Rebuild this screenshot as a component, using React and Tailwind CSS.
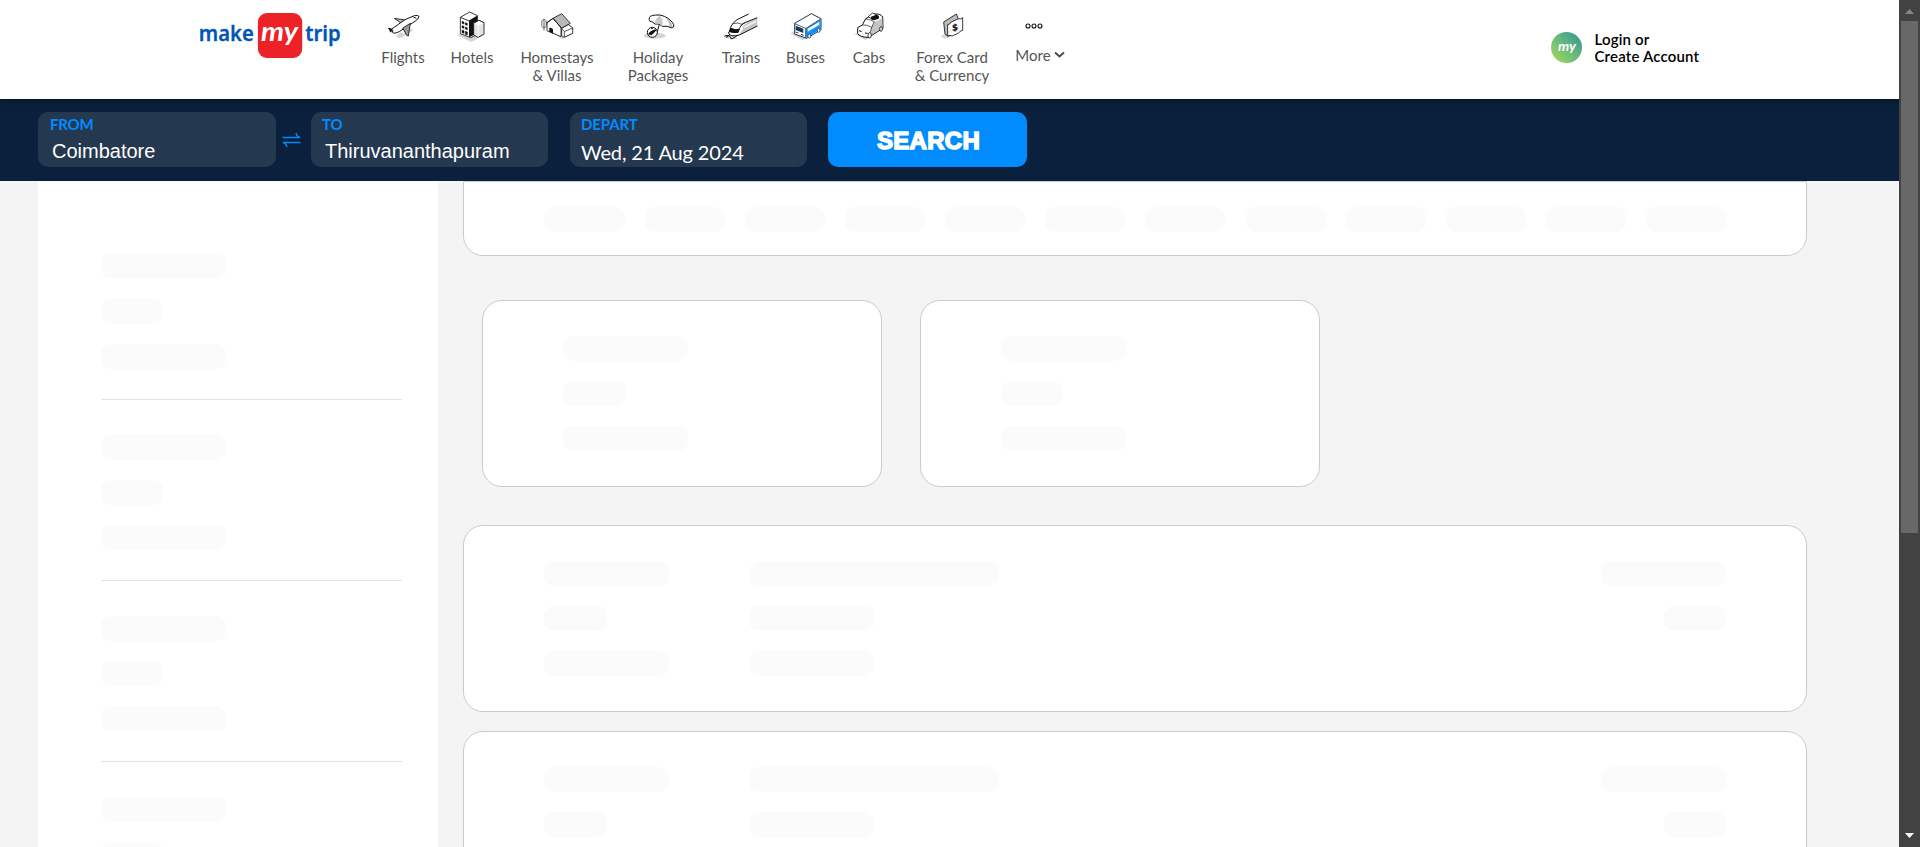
import React from "react";

const K = "#111";

function FlightIcon() {
  return (
    <svg width="36" height="30" viewBox="615 30 108 90" fill="none" strokeLinejoin="round">
      <path d="M648 107l12-13 16 4 22-18-2 10-36 22z" fill="#d4d4d4" />
      <path d="M643 52l38 6-14 11z" fill="#bdbdbd" stroke={K} strokeWidth="2.5" />
      <path d="M624 82l11 2 40-28 28-12q12-2 14 2-1 8-12 15l-46 30q-16 9-22 3l2-6z" fill="#fff" stroke={K} strokeWidth="3" />
      <path d="M627 84l10 1-3 9-4-1z" fill={K} />
      <path d="M668 81l23-14-6 38-5-2z" fill="#9a9a9a" stroke={K} strokeWidth="2.5" />
      <path d="M700 48l9 4" stroke={K} strokeWidth="3" />
    </svg>
  );
}

function HotelIcon() {
  return (
    <svg width="36" height="32" viewBox="822 28 108 96" fill="none" strokeLinejoin="round">
      <path d="M832 104l40-16 40 16-38 20z" fill="#d4d4d4" />
      <path d="M841 50l28-16 23 11v56l-20 10-31-12z" fill="#fff" stroke={K} strokeWidth="2.5" />
      <path d="M867 60l25-14v52l-25 12z" fill={K} />
      <path d="M841 50l26 11 25-15" stroke={K} strokeWidth="2.5" />
      <path d="M846 62l6 2v6l-6-2zM856 66l6 2v6l-6-2zM846 75l6 2v6l-6-2zM856 79l6 2v6l-6-2zM846 88l6 2v8l-6-2zM856 92l6 2v9l-6-2z" fill={K} stroke={K} strokeWidth="1.5" />
      <path d="M881 68l16-9 15 7v34l-18 10-13-7z" fill="#e4e4e4" stroke={K} strokeWidth="2.5" />
      <path d="M881 68l15 7 16-9-15-7z" fill="#fff" />
      <path d="M881 68l14 6v35" stroke="#fff" strokeWidth="2" />
      <path d="M881 68l16-9 15 7" stroke={K} strokeWidth="2.5" />
    </svg>
  );
}

function HomeIcon() {
  return (
    <svg width="36" height="28" viewBox="116 34 108 84" fill="none" strokeLinejoin="round">
      <path d="M160 100l26 16 34-17-28-14z" fill="#d4d4d4" />
      <ellipse cx="131" cy="69" rx="7" ry="13" fill="#eee" stroke="#333" strokeWidth="2" />
      <path d="M131 58v32" stroke="#333" strokeWidth="2" />
      <path d="M140 65l18-12 24 24v31l-42-18z" fill="#fff" stroke={K} strokeWidth="2.5" />
      <path d="M158 53l26-14 26 29-26 15z" fill="#b9b9b9" stroke={K} strokeWidth="2.5" />
      <path d="M138 68l20-15 26 30" stroke={K} strokeWidth="2.5" />
      <path d="M147 94V82q6-3 11 4v13z" fill={K} />
      <path d="M184 83l20-11 13 9v17l-26 12-7-5z" fill="#fff" stroke={K} strokeWidth="2.5" />
      <path d="M184 84l8 9 25-11M192 93v16" stroke={K} strokeWidth="2" />
    </svg>
  );
}

function HolidayIcon() {
  return (
    <svg width="36" height="28" viewBox="420 34 108 84" fill="none" strokeLinejoin="round">
      <ellipse cx="464" cy="105" rx="33" ry="9" fill="#d4d4d4" />
      <path d="M480 64l-10 36" stroke={K} strokeWidth="3" />
      <path d="M448 51q2-9 32-8 28 6 41 28 2 10-5 11-15-8-29-5-8-10-22-7-8-8-15-8-4-5-2-11z" fill="#fff" stroke={K} strokeWidth="3" />
      <path d="M480 45q-18 10-14 24 13-2 20 7 6-18-6-31z" fill="#c9c9c9" />
      <path d="M496 50q12 13 14 28l6 2q2-18-20-30z" fill="#b5b5b5" />
      <circle cx="457" cy="95" r="15" fill="#fff" stroke={K} strokeWidth="3" />
      <path d="M444 101q5-10 22-15l4 2q-8 9-16 16zM452 82l10-2-6 6z" fill={K} />
    </svg>
  );
}

function TrainIcon() {
  return (
    <svg width="36" height="28" viewBox="669 37 108 84" fill="none" strokeLinejoin="round">
      <path d="M670 110l30-5 12 13-22 1z" fill="#d4d4d4" />
      <path d="M772 55l-44 16-10 35 54-27z" fill="#c4c4c4" />
      <path d="M746 43l-35 17q-12 8-21 27l-3 14q4 9 26 8l16-20q-4-10 12-20l30-14" fill="#fff" />
      <path d="M746 43l-35 17q-12 8-20 23M772 54l-35 14q-14 6-18 16M772 79l-54 27q-24 6-31-3l-1-6" stroke={K} strokeWidth="3" />
      <path d="M700 72q12-5 26 2l11-7" stroke={K} strokeWidth="2" />
      <path d="M691 83q12 9 30 3l-6 13q-17 3-29-3z" fill={K} />
      <path d="M673 109l14-2 8 11 20-12M678 114l10-7" stroke={K} strokeWidth="3" />
      <path d="M733 79l36-18v7l-36 18z" fill="#eee" />
    </svg>
  );
}

function BusIcon() {
  return (
    <svg width="36" height="30" viewBox="23 32 108 90" fill="none" strokeLinejoin="round">
      <path d="M30 100l16-12 34 26-14 6z" fill="#d4d4d4" />
      <path d="M43 69l50-29 29 15v33l-43 26-36-13z" fill="#fff" stroke="#1d3854" strokeWidth="3" />
      <path d="M76 85l45-28v30l-43 26z" fill="#1290ff" />
      <path d="M82 85l35-21v9l-35 21z" fill="#fff" />
      <path d="M43 70l33 14v29M77 84l44-28" stroke="#1d3854" strokeWidth="2.5" />
      <path d="M46 76l23 9v13l-23-9z" fill="#1d3854" />
      <path d="M46 95l8 3M62 102l8 3" stroke="#1d3854" strokeWidth="3" />
      <ellipse cx="87" cy="107" rx="4.500" ry="6" fill="#fff" stroke="#1d3854" strokeWidth="2.500" />
      <ellipse cx="115" cy="90" rx="4" ry="6" fill="#fff" stroke="#1d3854" strokeWidth="2.500" />
    </svg>
  );
}

function CabIcon() {
  return (
    <svg width="36" height="30" viewBox="212 32 108 90" fill="none" strokeLinejoin="round">
      <path d="M222 101l18-6 30 16-14 8z" fill="#d4d4d4" />
      <path d="M232 82l14-8 10-19 24-13q20-4 27 8l1 34-44 27q-26 0-32-12z" fill="#fff" stroke={K} strokeWidth="3" />
      <path d="M272 83l11-18 23-11v29l-34 21z" fill="#c4c4c4" />
      <path d="M246 74q14-2 28 7l8-17q-10-6-26-8M274 81l-6 20" stroke={K} strokeWidth="2" />
      <path d="M264 49l12-11 14 6-1 8-12 6z" fill="#fff" stroke={K} strokeWidth="2.500" />
      <path d="M272 49l16-6 8 4-1 8-14 5-9-4z" fill={K} />
      <path d="M236 91l8 3M254 98l8 1" stroke={K} strokeWidth="3" />
      <ellipse cx="268" cy="105" rx="5" ry="8" fill="#fff" stroke={K} strokeWidth="2.500" />
      <ellipse cx="302" cy="86" rx="4" ry="7" fill="#fff" stroke={K} strokeWidth="2.500" />
    </svg>
  );
}

function ForexIcon() {
  return (
    <svg width="34" height="28" viewBox="465 36 102 84" fill="none" strokeLinejoin="round">
      <path d="M482 108l20-10 10 12-18 6z" fill="#d4d4d4" />
      <path d="M491 66l38-24 6 14-22 50-10 2-8-6z" fill="#bbb" stroke={K} strokeWidth="2.500" />
      <path d="M503 74q7 0 9-7l24-11q6 3 12-3v38q-8 1-12 8l-20 9q-6-4-13 0z" fill="#fff" stroke={K} strokeWidth="2.500" />
      <text x="517" y="92" transform="rotate(-12 526 82)" fontFamily="Liberation Sans, sans-serif" fontWeight="700" fontStyle="italic" fontSize="28" fill={K} stroke={K} strokeWidth="1">$</text>
    </svg>
  );
}

function MoreIcon() {
  return (
    <svg width="18" height="8" viewBox="0 0 18 8" fill="none" stroke={K} strokeWidth="1.1">
      <circle cx="3" cy="4" r="2" />
      <circle cx="9" cy="4" r="2" />
      <circle cx="15" cy="4" r="2" />
    </svg>
  );
}

const NAV = [
  { label: ["Flights"], w: "w-[70px]", icon: <FlightIcon /> },
  { label: ["Hotels"], w: "w-[68px]", icon: <HotelIcon /> },
  { label: ["Homestays", "& Villas"], w: "w-[102px]", icon: <HomeIcon /> },
  { label: ["Holiday", "Packages"], w: "w-[100px]", icon: <HolidayIcon /> },
  { label: ["Trains"], w: "w-[66px]", icon: <TrainIcon /> },
  { label: ["Buses"], w: "w-[63px]", icon: <BusIcon /> },
  { label: ["Cabs"], w: "w-[64px]", icon: <CabIcon /> },
  { label: ["Forex Card", "& Currency"], w: "w-[102px]", icon: <ForexIcon /> },
];

function Logo() {
  return (
    <svg width="144" height="46" viewBox="0 0 144 46" className="shrink-0">
      <g fontFamily="'Noto Sans', 'Open Sans', sans-serif" fontWeight="600" fontSize="21" fill="#0055b5" stroke="#0055b5" strokeWidth="0.300">
        <text x="0.800" y="28.500" textLength="55" lengthAdjust="spacingAndGlyphs">make</text>
        <text x="107.200" y="28.500" textLength="35.500" lengthAdjust="spacingAndGlyphs">trip</text>
      </g>
      <rect x="59.900" y="1" width="44.300" height="45" rx="9" fill="#ec2227" />
      <text x="63" y="29" textLength="37" lengthAdjust="spacingAndGlyphs" fontFamily="Lato, sans-serif" fontStyle="italic" fontWeight="700" fontSize="27" fill="#fff">my</text>
    </svg>
  );
}

function Header() {
  return (
    <header className="relative z-10 flex h-[99px] shrink-0 bg-white pl-[198px] shadow-[0_1px_7px_rgba(0,0,0,0.5)]">
      <div className="w-[170px] pt-[12px]">
        <Logo />
      </div>
      <nav className="flex text-[15px] leading-[18px] text-[#555]">
        {NAV.map((n) => (
          <a key={n.label[0]} className={`flex flex-col items-center ${n.w}`}>
            <span className="flex h-[48px] items-center pt-[3px]">{n.icon}</span>
            {n.label.map((l) => (
              <span key={l} className="whitespace-nowrap">{l}</span>
            ))}
          </a>
        ))}
        <a className="flex w-[74px] flex-col items-center">
          <span className="flex h-[46px] items-center pt-[6px] pr-[13px]"><MoreIcon /></span>
          <span className="flex items-center gap-[3px]">
            More
            <svg width="11" height="8" viewBox="0 0 11 8" fill="none" stroke="#4a4a4a" strokeWidth="2">
              <path d="M1 1.500l4.500 4 4.500-4" />
            </svg>
          </span>
        </a>
      </nav>
      <div className="ml-[474px] flex items-start pt-[31px]">
        <span className="mt-px flex size-[31px] items-center justify-center rounded-full bg-linear-to-tr from-[#a6df4c] to-[#219393]">
          <svg width="24" height="24" viewBox="0 0 24 24">
            <text x="3" y="15" textLength="18" lengthAdjust="spacingAndGlyphs" fontFamily="Lato, sans-serif" fontStyle="italic" fontWeight="700" fontSize="13" fill="#fff">my</text>
          </svg>
        </span>
        <p className="ml-[12.500px] text-[15px] leading-[17px] font-semibold tracking-[0.18px] whitespace-nowrap text-black">
          Login or
          <br />
          Create Account
        </p>
      </div>
    </header>
  );
}

function SearchBar() {
  return (
    <div className="flex h-[82px] shrink-0 bg-[#0b203c] px-[38px] pt-[13px]">
      <div className="h-[55px] w-[238px] rounded-[10px] bg-[#243850] pl-[12px]">
        <div className="pt-[4px] text-[15px] leading-[17px] font-bold tracking-[-0.2px] text-[#008cff]">FROM</div>
        <div className="pt-[6px] pl-[2px] font-['Liberation_Sans',sans-serif] text-[20px] leading-[24px] text-white">Coimbatore</div>
      </div>
      <div className="flex w-[35px] justify-center pt-[20px] pr-[4px]">
        <svg width="19" height="16" viewBox="0 0 19 16" fill="none" stroke="#008cff" strokeWidth="1.300">
          <path d="M0.500 5.500h17.500q-3-0.500-4-4.500M18.500 10.500H1q3 0.500 4 4.500" />
        </svg>
      </div>
      <div className="h-[55px] w-[237px] rounded-[10px] bg-[#243850] pl-[11px]">
        <div className="pt-[4px] text-[15px] leading-[17px] font-bold tracking-[-0.2px] text-[#008cff]">TO</div>
        <div className="pt-[6px] pl-[3px] font-['Liberation_Sans',sans-serif] text-[20px] leading-[24px] text-white">Thiruvananthapuram</div>
      </div>
      <div className="ml-[22px] h-[55px] w-[237px] rounded-[10px] bg-[#243850] pl-[11px]">
        <div className="pt-[4px] text-[15px] leading-[17px] font-bold tracking-[-0.1px] text-[#008cff]">DEPART</div>
        <div className="pt-[7px] text-[20px] leading-[24px] tracking-[-0.15px] text-white">Wed, 21 Aug 2024</div>
      </div>
      <button className="ml-[21px] h-[55px] w-[199px] rounded-[10px] bg-[#008cff] pt-[2px] pl-[2px] font-['Liberation_Sans',sans-serif] text-[24px] font-bold tracking-[0.3px] text-white [-webkit-text-stroke:1.500px_white]">
        SEARCH
      </button>
    </div>
  );
}

function Bone({ w }) {
  return <div className={`h-[25px] shrink-0 rounded-[10px] bg-[#fbfbfb] ${w}`} />;
}

function Stack({ widths, end }) {
  return (
    <div className={`flex flex-col gap-[20px] ${end ? "items-end" : "items-start"}`}>
      {widths.map((w, i) => (
        <Bone key={i} w={w} />
      ))}
    </div>
  );
}

const TRIO = ["w-[125px]", "w-[62px]", "w-[125px]"];
const CARD_TRIO = ["w-[125px]", "w-[63px]", "w-[125px]"];

function Sidebar() {
  return (
    <aside className="flex w-[400px] shrink-0 flex-col overflow-hidden bg-white pt-[38px] pr-[36px] pl-[63px]">
      {[0, 1, 2, 3].map((i) => (
        <div key={i} className="h-[181px] shrink-0 border-b border-[#e3e3e3] pt-[35px]">
          <Stack widths={TRIO} />
        </div>
      ))}
    </aside>
  );
}

function WideCard() {
  return (
    <div className="flex h-[187px] shrink-0 rounded-[20px] border border-[#cbcbcb] bg-white px-[80px] pt-[35px]">
      <div className="w-[205px]">
        <Stack widths={CARD_TRIO} />
      </div>
      <Stack widths={["w-[250px]", "w-[125px]", "w-[125px]"]} />
      <div className="ml-auto">
        <Stack widths={["w-[125px]", "w-[62px]"]} end />
      </div>
    </div>
  );
}

function Results() {
  return (
    <main className="ml-[25px] flex w-[1344px] shrink-0 flex-col overflow-hidden">
      <div className="flex h-[75px] shrink-0 justify-between rounded-b-[20px] border border-[#cbcbcb] bg-white px-[80px] pt-[25px]">
        {Array.from({ length: 12 }, (_, i) => (
          <Bone key={i} w={i === 0 ? "w-[81px]" : "w-[80px]"} />
        ))}
      </div>
      <div className="mt-[44px] mb-[38px] flex gap-[38px] pl-[19px]">
        {[CARD_TRIO, TRIO].map((widths, i) => (
          <div key={i} className="h-[187px] w-[400px] rounded-[20px] border border-[#cbcbcb] bg-white pt-[35px] pl-[80px]">
            <Stack widths={widths} />
          </div>
        ))}
      </div>
      <div className="flex flex-col gap-[19px]">
        <WideCard />
        <WideCard />
      </div>
    </main>
  );
}

function Scrollbar() {
  return (
    <div className="flex w-[21px] shrink-0 flex-col items-center bg-[#424242]">
      <div className="flex h-[21px] shrink-0 items-start pt-[9px]">
        <svg width="9" height="5" viewBox="0 0 9 5"><path d="M0 5l4.500-5L9 5z" fill="#868686" /></svg>
      </div>
      <div className="mr-px h-[512px] w-[17px] shrink-0 bg-[#686868]" />
      <div className="mt-auto pb-[9px]">
        <svg width="9" height="5" viewBox="0 0 9 5" className="block"><path d="M0 0h9L4.500 5z" fill="#fff" /></svg>
      </div>
    </div>
  );
}

export default function App() {
  return (
    <div className="flex h-[847px] w-[1920px] overflow-hidden font-[Lato,sans-serif]">
      <div className="flex w-[1899px] flex-col overflow-hidden bg-[#f4f4f4]">
        <Header />
        <SearchBar />
        <div className="flex min-h-0 flex-1 pl-[38px]">
          <Sidebar />
          <Results />
        </div>
      </div>
      <Scrollbar />
    </div>
  );
}
